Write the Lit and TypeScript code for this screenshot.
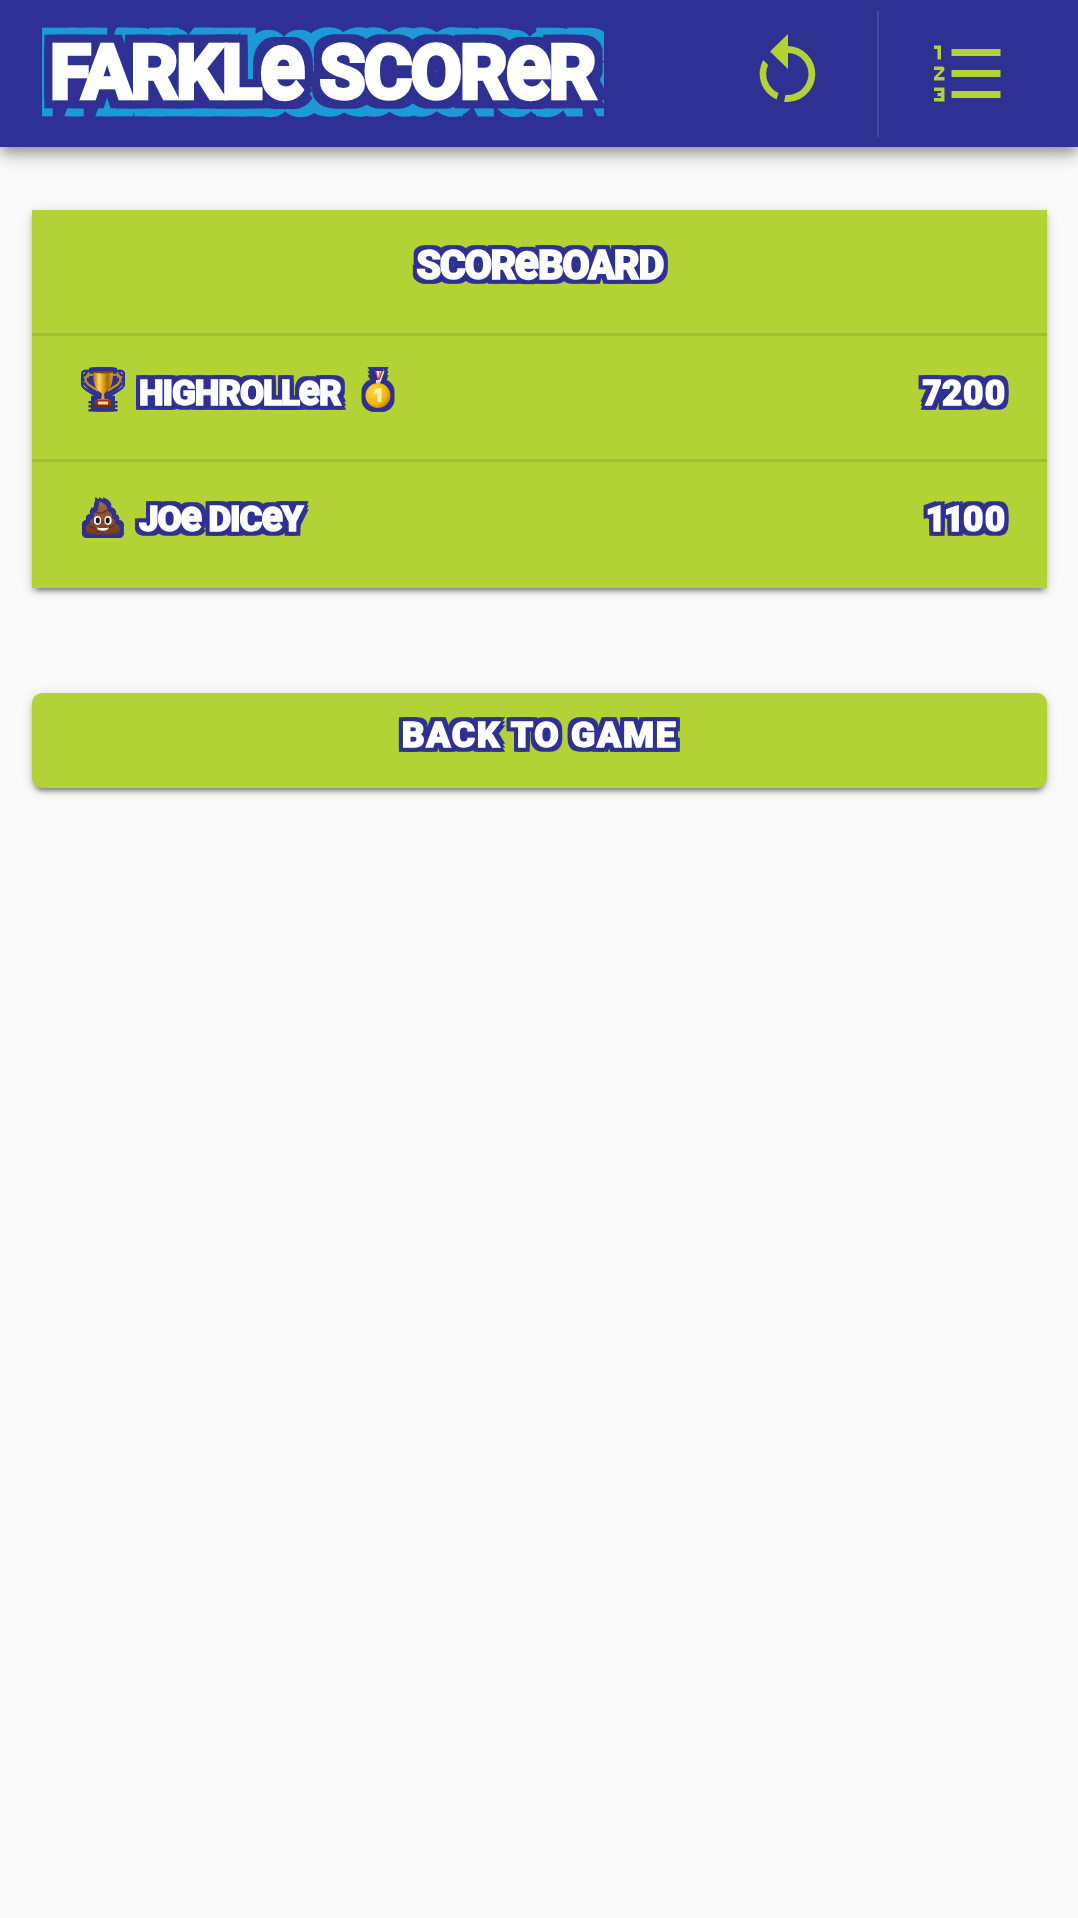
import { LitElement, html, svg, css } from "lit";
import { customElement } from "lit/decorators.js";

interface Player {
  name: string;
  score: number;
  badge: "trophy" | "poop";
  medal: boolean;
}

const players: Player[] = [
  { name: "HighRoller", score: 7200, badge: "trophy", medal: true },
  { name: "Joe Dicey", score: 1100, badge: "poop", medal: false },
];

// Capitals everywhere except "e", which keeps its lower-case form at cap height.
const unicase = (text: string) =>
  text.split(/(e)/).map((part) => (part === "e" ? html`<span class="e">e</span>` : part));

const outline = (color: string, d: number, name: string, full = true) => {
  const steps = full ? [-d, 0, d] : [-d, d];
  const offsets = steps.flatMap((x) => steps.map((y) => [x, y]));
  return svg`${offsets.map(([x, y], i) => svg`<feOffset in="SourceAlpha" dx=${x} dy=${y} result=${name + i}></feOffset>`)}
    <feMerge result=${name + "m"}>${offsets.map((_, i) => svg`<feMergeNode in=${name + i}></feMergeNode>`)}</feMerge>
    <feFlood flood-color=${color}></feFlood>
    <feComposite operator="in" in2=${name + "m"} result=${name}></feComposite>`;
};

const filters = html`<svg class="defs" width="0" height="0" aria-hidden="true">
  <defs>
    <filter id="edge" x="-20%" y="-50%" width="140%" height="200%" color-interpolation-filters="sRGB">
      ${outline("#2e3192", 3.7, "n")}
      <feMerge><feMergeNode in="n"></feMergeNode><feMergeNode in="SourceGraphic"></feMergeNode></feMerge>
    </filter>
    <filter id="title-edge" x="-10%" y="-50%" width="120%" height="200%" color-interpolation-filters="sRGB">
      ${outline("#1c9ad6", 15.5, "c", false)}
      ${outline("#2e3192", 7.8, "n")}
      <feMerge>
        <feMergeNode in="c"></feMergeNode><feMergeNode in="n"></feMergeNode><feMergeNode in="SourceGraphic"></feMergeNode>
      </feMerge>
    </filter>
  </defs>
</svg>`;

const trophy = html`<svg class="emoji" viewBox="0 0 44 45">
  <defs>
    <linearGradient id="cup"><stop offset="0" stop-color="#a66a08"/><stop offset=".3" stop-color="#ffd65c"/><stop offset=".5" stop-color="#e3a51c"/><stop offset=".72" stop-color="#a76b06"/><stop offset="1" stop-color="#dba32a"/></linearGradient>
  </defs>
  <path d="M12 8C4 6 3 13 7 17c3 3 7 4 10 7M32 8c8-2 9 5 5 9-3 3-7 4-10 7" fill="none" stroke="#c98d1b" stroke-width="2.2"/>
  <path d="M12 5h20c0 10-2 17-7 20l-2 2 1 7h-4l1-7-2-2C14 22 12 15 12 5Z" fill="url(#cup)"/>
  <ellipse cx="22" cy="5.2" rx="10" ry="1.3" fill="#7d4c04"/>
  <path d="M17 32h10l3 3H14Z" fill="#b97a12"/>
  <path d="M14 33h16v6H14Z" fill="#92380f"/>
  <path d="M11.5 38h21v2.5h-21Z" fill="#7c260b"/>
  <path d="M17 34.5h10v3H17Z" fill="#f7d398"/>
</svg>`;

const poop = html`<svg class="emoji" viewBox="0 0 44 45">
  <defs><linearGradient id="brown" x2="0" y2="1"><stop offset="0" stop-color="#a5694d"/><stop offset="1" stop-color="#71391f"/></linearGradient></defs>
  <path d="M18 8c4 2 10 5 8 10 4 1 6 4 5 7 3 1 4 4 3 6 6 0 7 9 1 10-8 1-19 1-26 0-6-1-5-10 0-10-1-3 1-6 4-6-1-4 1-6 4-7-1-3 2-6 1-10Z" fill="url(#brown)"/>
  <path d="M14 19c4 2 9 1 12-2M12 27c6 4 14 2 19-2M9 33c8 5 19 3 25-1" fill="none" stroke="#5e2c18" stroke-width="1.2"/>
  <ellipse cx="16.5" cy="27.5" rx="3.6" ry="4.4" fill="#fff"/><ellipse cx="27" cy="27.5" rx="3.6" ry="4.4" fill="#fff"/>
  <ellipse cx="16.8" cy="27.5" rx="2" ry="3" fill="#181818"/><ellipse cx="26.7" cy="27.5" rx="2" ry="3" fill="#181818"/>
  <path d="M15.5 34.5q6.3 1 12.5 0q-1.5 3.2-6.2 3.2t-6.3-3.2Z" fill="#fff"/>
</svg>`;

const medal = html`<svg class="emoji medal" viewBox="0 0 44 45">
  <defs><radialGradient id="gold" cx=".35" cy=".35" r=".75"><stop offset="0" stop-color="#ffd84a"/><stop offset=".65" stop-color="#f2b40c"/><stop offset="1" stop-color="#c47a06"/></radialGradient></defs>
  <path d="M15.5 4h5l4 11h-3Z" fill="#252c83"/>
  <path d="M18.5 4h2.5l3 10h-2Z" fill="#e3243c"/>
  <path d="M20.5 4h3l-1.5 8Z" fill="#fff"/><path d="M24 4h4.500l-4 11h-2Z" fill="#fff"/><path d="M25.2 4h1.900l-3.400 9-1-1Z" fill="#e3243c"/>
  <path d="M20 13h4v4h-4Z" fill="#e6ddc0"/>
  <circle cx="22" cy="28.5" r="12.5" fill="url(#gold)"/>
  <path d="M18.5 23.5l4.5-2.500h2.500v14h-4v-9l-3 1Z" fill="#fff0ae"/>
</svg>`;

@customElement("app-root")
export class AppRoot extends LitElement {
  static styles = css`
    :host {
      display: block;
      min-height: 1918px;
      background: #fafafa;
      color: #fff;
      font-family: Roboto, "Open Sans", "Liberation Sans", sans-serif;
      font-weight: 900;
    }
    .defs { position: absolute; }
    .bar {
      display: flex;
      height: 147px;
      background: #2e3192;
      box-shadow: 0 5px 10px -2px rgba(0,0,0,.25), 0 10px 13px rgba(0,0,0,.16), 0 3px 26px rgba(0,0,0,.12);
    }
    .brand { width: 562px; margin-left: 42px; overflow: hidden; }
    .word { white-space: nowrap; display: inline-block; -webkit-text-stroke: 1.4px #fff; text-transform: uppercase; filter: url(#edge); }
    .title {
      margin: 0 0 0 8px;
      font-size: 74px;
      line-height: 146px;
      letter-spacing: -1.6px;
      -webkit-text-stroke: 4.4px #fff;
      filter: url(#title-edge);
    }
    .e { font-size: 1.28em; line-height: 0; text-transform: none; display: inline-block; transform: scaleX(.88); margin: 0 -.035em; }
    .tool { display: flex; align-items: center; justify-content: center; }
    .undo { width: 175px; margin-left: 94px; box-sizing: border-box; padding-left: 5px; margin-right: 6px; }
    .divider { width: 2px; height: 126px; margin: 11px 0 0 -2px; background: #464a9f; }
    .list { margin-left: 47.5px; }
    .tool svg { width: 84px; height: 84px; fill: #b2d235; }
    main { padding: 63px 31px 0 32px; }
    .card, .back { background: #b2d235; box-shadow: 0 7px 4px -5px rgba(0,0,0,.3), 0 4px 5px rgba(0,0,0,.2), 0 2px 13px rgba(0,0,0,.13); }
    .card { height: 378px; }
    .row { height: 126px; box-sizing: border-box; display: flex; align-items: flex-start; }
    .row:not(:last-child) { border-bottom: 3px solid #a1be31; }
    .heading { justify-content: center; }
    .heading .word { font-size: 40px; line-height: 112px; letter-spacing: -1.5px; }
    .player { padding: 0 41px 0 49px; }
    .player .word { font-size: 35px; line-height: 115px; letter-spacing: -1.1px; }
    .emoji { width: 44px; height: 45px; margin-top: 31px; flex: none; filter: url(#edge); clip-path: inset(0); }
    .name { margin-left: 14px; }
    .medal { margin-left: 15px; }
    .player .score { margin-left: auto; letter-spacing: .6px; font-variant-numeric: proportional-nums; }
    .back {
      display: flex; align-items: flex-start; justify-content: center; width: 100%; height: 95px; margin-top: 105px; padding: 0;
      border: 0; border-radius: 10px; color: #fff; font: inherit;
    }
    .back .word { font-size: 35.5px; line-height: 84px; letter-spacing: 1.7px; }
  `;

  render() {
    return html`${filters}
      <header class="bar">
        <div class="brand"><h1 class="word title">${unicase("Farkle Scorer")}</h1></div>
        <div class="tool undo">
          <svg viewBox="0 0 84 84"><path d="M42 2L24 19.500l18 17.500V21a21 21 0 1 1-2.500 41.900l-1.500 6.900A28 28 0 1 0 42 14ZM17.200 28l5 5a21 21 0 0 0 10.300 28l-1.800 6.500A28 28 0 0 1 17.200 28Z"></path></svg>
        </div>
        <div class="divider"></div>
        <div class="tool list">
          <svg viewBox="0 0.14 24 24"><path d="M7,13V11H21V13H7M7,19V17H21V19H7M7,7V5H21V7H7M3,8V5H2V4H4V8H3M2,17V16H5V20H2V19H4V18.5H3V17.5H4V17H2M4.25,10A0.75,0.75 0 0,1 5,10.75C5,10.95 4.92,11.14 4.79,11.27L3.12,13H5V14H2V13.08L4,11H2V10H4.25Z"></path></svg>
        </div>
      </header>
      <main>
        <section class="card">
          <div class="row heading"><span class="word">${unicase("Scoreboard")}</span></div>
          ${players.map((p) => html`<div class="row player">
            ${p.badge === "trophy" ? trophy : poop}
            <span class="word name">${unicase(p.name)}</span>
            ${p.medal ? medal : ""}
            <span class="word score">${p.score}</span>
          </div>`)}
        </section>
        <button class="back"><span class="word">Back to game</span></button>
      </main>`;
  }
}
